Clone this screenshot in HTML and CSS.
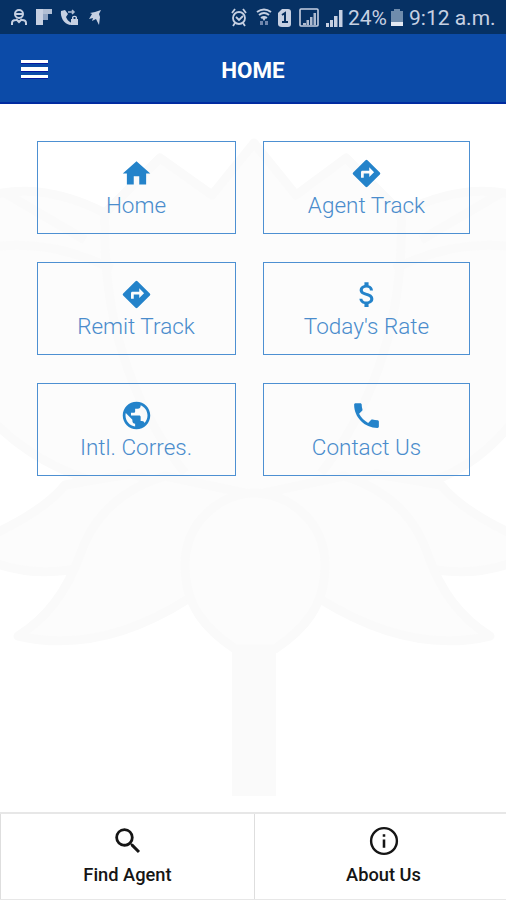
FILE: index.html
```html
<!DOCTYPE html>
<html lang="en">
<head>
<meta charset="utf-8">
<title>Home</title>
<link rel="stylesheet" href="styles.css">
</head>
<body>
<div class="app">
  <div class="status">
    <svg class="notices" width="96" height="34" viewBox="0 0 96 34">
      <g fill="none" stroke="#c6d0e2" stroke-width="2">
        <circle cx="9" cy="14" r="4"/>
        <path d="M6 14h6M2 25v-2c0-2 2-3 4-3h1M16 25v-2c0-2-2-3-4-3h-1M6 19l3 3 3-3"/>
      </g>
      <path fill="#c6d0e2" d="M26 9h7v16h-7z"/>
      <path fill="#b1bfd5" d="M33 9h9v5h-9z"/>
      <path fill="#8fa4c3" d="M33 14h5v6h-5z"/>
      <path fill="#c6d0e2" d="M51 11l4-1 3 4-2 3c1 2 2 4 4 5l3 2-3 1c-6-1-10-8-9-14zM62 17a3 3 0 0 1 5 0v2h1v6h-7v-6h1zm1.500 0v2h2v-2z"/>
      <path fill="none" stroke="#b1bfd5" stroke-width="1.500" d="M58 12h6M62 10l2 2-2 2"/>
      <path fill="#c6d0e2" d="M91 10l-2 4 1 3-1 8-3-6-4 2 1-3-4 1 3-5-2-1 5-1z"/>
    </svg>
    <div class="system">
      <svg width="118" height="34" viewBox="0 0 118 34">
        <g fill="none" stroke="#c6d0e2" stroke-width="1.800">
          <circle cx="9" cy="18" r="6"/>
          <path d="M6 17l3 3 4-4M2 13l3-4M13 9l3 4M5 23l-2 3M13 23l2 3"/>
          <path stroke-width="2" d="M27 12q7-5 14 0M29 15q5-4 10 0M31 18q3-2 6 0"/>
        </g>
        <path fill="#c6d0e2" d="M31.500 17h5L34 21z"/>
        <path fill="#7187ad" d="M30 21h3v4h-3zM35 21h3v4h-3z"/>
        <path fill="#c6d0e2" d="M52 9h6q3 0 3 3v12q0 3-3 3h-6q-4 0-4-3V13z"/>
        <path fill="none" stroke="#08305f" stroke-width="2" d="M52 15l3-2v9M52 22h6"/>
        <rect x="70" y="9" width="18" height="17" rx="1" fill="none" stroke="#c6d0e2" stroke-width="1.600"/>
        <path fill="#aebbd0" d="M73 23h3v2h-3zM76.500 20h2.500v5h-2.500zM80 17h2.500v8H80zM83.500 13H86v12h-2.500z"/>
        <path fill="#c6d0e2" d="M96 23h3v4h-3zM100 20h3v7h-3zM104 16h3.500v11H104zM109 10h3.500v17H109z"/>
      </svg>
      <span class="battery-text">24%</span>
      <svg class="battery" width="12" height="18" viewBox="0 0 12 18"><path fill="#6f8cac" d="M3 0h6v2h3v11H0V2h3z"/><path fill="#e3e9f2" d="M0 13h12v4H0z"/></svg>
      <span class="clock">9:12 a.m.</span>
    </div>
  </div>
  <header class="bar">
    <div class="menu"><i></i><i></i><i></i></div>
    <h1>HOME</h1>
  </header>
  <main>
    <svg class="lotus" width="506" height="708" viewBox="0 104 506 708">
      <g fill="#fcfcfc" stroke="#fafafa" stroke-width="9" stroke-linejoin="round">
        <path d="M-8 195Q45 182 105 213L160 158 212 195 254 143 296 195 346 158 401 213Q462 182 514 195V420Q460 490 375 490L254 505 130 490Q45 475-8 420z"/>
        <path d="M-8 247q60-8 120 22M514 247q-60-8-120 22M105 213q-5 150 80 260M401 213q5 150-80 260M5 193l80 47M501 193l-80 47"/>
        <path d="M-8 535Q45 510 65 485L130 474 190 490 90 565Q40 580-8 562zM514 535q-53-25-73-50l-65-11-60 16 100 75q50 15 98-3z"/>
        <path d="M18 636Q60 610 80 555 100 496 165 476L254 495 344 476Q408 496 428 555 447 610 490 636 410 655 320 599L254 560 188 599Q100 655 18 636z"/>
        <path d="M254 493C223 493 185 520 185 565c0 42 22 65 50 84h40c28-19 50-42 50-84 0-45-38-72-71-72z"/>
      </g>
      <path fill="#fafafa" d="M232 650q22-7 44 0v146h-44z"/>
    </svg>
    <div class="grid">
      <div class="tile"><svg viewBox="0 0 24 24"><path d="M10 20v-6h4v6h5v-8h3L12 3 2 12h3v8z"/></svg><span>Home</span></div>
      <div class="tile"><svg viewBox="0 0 24 24"><path d="M21.710 11.290l-9-9a1 1 0 0 0-1.420 0l-9 9a1 1 0 0 0 0 1.420l9 9a1 1 0 0 0 1.420 0l9-9a1 1 0 0 0 0-1.420zM14 14.500V12h-4v3H8v-4c0-.55.45-1 1-1h5V7.500l3.500 3.500z"/></svg><span>Agent Track</span></div>
      <div class="tile"><svg viewBox="0 0 24 24"><path d="M21.710 11.290l-9-9a1 1 0 0 0-1.420 0l-9 9a1 1 0 0 0 0 1.420l9 9a1 1 0 0 0 1.420 0l9-9a1 1 0 0 0 0-1.420zM14 14.500V12h-4v3H8v-4c0-.55.45-1 1-1h5V7.500l3.500 3.500z"/></svg><span>Remit Track</span></div>
      <div class="tile"><svg viewBox="0 0 24 24"><path d="M12.300 10.900c-2.270-.59-3-1.200-3-2.150 0-1.090 1.010-1.850 2.700-1.850 1.780 0 2.440.85 2.500 2.100h2.210c-.07-1.720-1.120-3.300-3.210-3.810V3h-3v2.160c-1.940.42-3.500 1.680-3.500 3.610 0 2.310 1.910 3.460 4.700 4.130 2.500.6 3 1.480 3 2.410 0 .69-.49 1.790-2.700 1.790-2.060 0-2.870-.92-2.980-2.100h-2.200c.12 2.190 1.760 3.420 3.680 3.830V21h3v-2.150c1.950-.37 3.500-1.500 3.500-3.550 0-2.840-2.430-3.810-4.700-4.400z"/></svg><span>Today's Rate</span></div>
      <div class="tile"><svg viewBox="0 0 24 24"><path d="M12 2C6.480 2 2 6.480 2 12s4.480 10 10 10 10-4.480 10-10S17.520 2 12 2zm-1 17.930c-3.950-.49-7-3.850-7-7.930 0-.62.080-1.210.21-1.790L9 15v1c0 1.100.9 2 2 2v1.930zm6.900-2.540c-.26-.81-1-1.390-1.900-1.390h-1v-3c0-.55-.45-1-1-1H8v-2h2c.55 0 1-.45 1-1V7h2c1.100 0 2-.9 2-2v-.41c2.930 1.190 5 4.060 5 7.410 0 2.080-.8 3.970-2.100 5.390z"/></svg><span>Intl. Corres.</span></div>
      <div class="tile"><svg viewBox="0 0 24 24"><path d="M6.620 10.790c1.440 2.830 3.760 5.140 6.590 6.590l2.200-2.200c.27-.27.67-.36 1.020-.24 1.120.37 2.330.57 3.570.57.55 0 1 .45 1 1V20c0 .55-.45 1-1 1C10.610 21 3 13.390 3 4c0-.55.45-1 1-1h3.500c.55 0 1 .45 1 1 0 1.250.2 2.450.57 3.570.11.35.03.74-.25 1.020z"/></svg><span>Contact Us</span></div>
    </div>
  </main>
  <nav>
    <div class="tab"><svg width="34" height="34" viewBox="0 0 24 24"><path d="M15.500 14h-.79l-.28-.27A6.470 6.470 0 0 0 16 9.500 6.500 6.500 0 1 0 9.500 16c1.610 0 3.090-.59 4.230-1.570l.27.28v.79l5 4.990L20.490 19zm-6 0C7.010 14 5 11.990 5 9.500S7.010 5 9.500 5 14 7.010 14 9.500 11.990 14 9.500 14z"/></svg><span>Find Agent</span></div>
    <div class="tab about"><svg width="34" height="34" viewBox="0 0 24 24"><circle cx="12" cy="12" r="9.100" fill="none" stroke="#151515" stroke-width="1.700"/><path d="M11.100 10.900h1.800v5.800h-1.800zM11.100 7.300h1.800v1.700h-1.800z"/></svg><span>About Us</span></div>
  </nav>
</div>
</body>
</html>
```
FILE: styles.css
```css
* { box-sizing: border-box; }
body { margin: 0; background: #fff; font-family: Roboto, "Liberation Sans", sans-serif; }
svg { display: block; flex: none; }
.app { width: 506px; height: 900px; display: flex; flex-direction: column; overflow: hidden; }
.status { height: 34px; flex: none; background: #063164; display: flex; justify-content: space-between; padding: 0 11px 0 10px; color: #c6d0e2; }
.system { display: flex; align-items: center; font-size: 22px; line-height: 34px; white-space: nowrap; }
.battery-text { width: 42px; font-size: 21px; padding-top: 2px; }
.battery { margin: 2px 6px 0 1px; }
.clock { width: 86px; padding-top: 2px; font-size: 21px; }
.bar { height: 70px; flex: none; background: #0c4ba8; border-bottom: 2px solid #002ba0; display: grid; grid-template-columns: 48px 1fr 48px; align-items: center; }
.menu { margin-left: 21px; width: 27px; display: grid; gap: 4px; padding-top: 2px; }
.menu i { height: 3.300px; background: #fff; box-shadow: 0 1px #0519a0; }
h1 { margin: 4px 0 0; color: #fff; text-align: center; font-size: 22.400px; line-height: 26px; font-weight: 700; }
main { height: 708px; flex: none; position: relative; padding: 37px 36px 0 37px; }
.lotus { position: absolute; left: 0; top: 0; }
.grid { position: relative; display: grid; grid-template-columns: 199px 207px; grid-auto-rows: 93px; gap: 28px 27px; }
.tile { border: 1px solid #4d90d2; display: flex; flex-direction: column; align-items: center; padding-top: 15px; color: #4a8ccc; font-size: 22.500px; line-height: 26px; font-weight: 300; white-space: nowrap; }
.tile:nth-child(odd) { padding-right: 1px; }
.tile svg { width: 33px; height: 33px; fill: #2483ca; }
.tile span { margin-top: 2px; }
nav { height: 88px; flex: none; display: grid; grid-template-columns: 254px 252px; border-top: 2px solid #e7e7e7; border-bottom: 1px solid #e7e7e7; }
.tab { border-left: 1px solid #dedede; display: flex; flex-direction: column; align-items: center; padding-top: 10px; color: #151515; font-size: 18.300px; line-height: 22px; font-weight: 500; }
.about { padding-left: 6px; }
.tab svg { fill: #151515; }
.tab span { margin-top: 6px; }
```
